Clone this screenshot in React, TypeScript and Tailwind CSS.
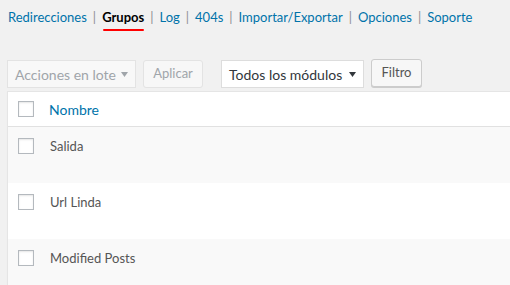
const tabs = ['Redirecciones', 'Grupos', 'Log', '404s', 'Importar/Exportar', 'Opciones', 'Soporte']

const rows = ['Salida', 'Url Linda', 'Modified Posts']

function Checkbox() {
  return (
    <span className="block w-4 h-4 border border-[#b4b9be] bg-white shadow-[inset_0_1px_2px_rgba(0,0,0,0.1)] shrink-0" />
  )
}

function Arrow({ dim }: { dim?: boolean }) {
  return (
    <svg width="7" height="5" viewBox="0 0 7 5" className={dim ? 'text-[#a0a5aa]' : 'text-[#32373c]'}>
      <path d="M0 0h7L3.5 5z" fill="currentColor" />
    </svg>
  )
}

export default function App() {
  return (
    <div className="min-h-screen bg-[#f1f1f1] overflow-hidden font-['Lato',sans-serif] text-[13px] text-[#444]">
      <nav className="flex items-start pl-2 pt-[8px] h-[32px]">
        {tabs.map((tab, i) => (
          <div key={tab} className="flex items-start">
            {i > 0 && <span className="px-[6px] text-[#8d8f91] leading-[19px]">|</span>}
            {tab === 'Grupos' ? (
              <span className="flex flex-col items-center">
                <span className="font-bold text-black leading-[19px]">{tab}</span>
                <span className="block mt-[2px] h-[2px] w-[41px] bg-[#ff0000] rounded-full" />
              </span>
            ) : (
              <a className="text-[#0073aa] leading-[19px]">{tab}</a>
            )}
          </div>
        ))}
      </nav>

      <div className="flex items-start mt-[28px] pl-[7px]">
        <div className="flex items-center justify-between w-[129px] h-[28px] px-[7px] border border-[#e3e3e3] bg-[#f8f8f8] text-[#a0a5aa] text-[14px]">
          <span>Acciones en lote</span>
          <Arrow dim />
        </div>
        <button className="ml-[7px] w-[60px] h-[28px] border border-[#e3e3e3] bg-[#f7f7f7] rounded-[3px] text-[#a0a5aa] text-[13px]">
          Aplicar
        </button>
        <div className="ml-[18px] flex items-center justify-between w-[143px] h-[28px] px-[7px] border border-[#ddd] bg-white text-[#32373c] text-[14px]">
          <span>Todos los módulos</span>
          <Arrow />
        </div>
        <button className="ml-[7px] -mt-px w-[51px] h-[28px] border border-[#ccc] bg-[#f7f7f7] rounded-[3px] shadow-[0_1px_0_#ccc] text-[#555] text-[13px]">
          Filtro
        </button>
      </div>

      <div className="mt-[3px] ml-[7px] w-[600px] border border-[#e5e5e5] bg-white shadow-[0_1px_1px_rgba(0,0,0,0.04)]">
        <div className="flex items-center h-[35px] pl-[10px] border-b border-[#e1e1e1]">
          <Checkbox />
          <span className="ml-[15px] text-[14px] text-[#0073aa]">Nombre</span>
        </div>
        {rows.map((row, i) => (
          <div
            key={row}
            className={`flex items-start h-[56px] pl-[10px] pt-[11px] ${i % 2 === 0 ? 'bg-[#f9f9f9]' : 'bg-white'}`}
          >
            <Checkbox />
            <span className="ml-[16px] leading-[16px] text-[#555]">{row}</span>
          </div>
        ))}
      </div>
    </div>
  )
}
